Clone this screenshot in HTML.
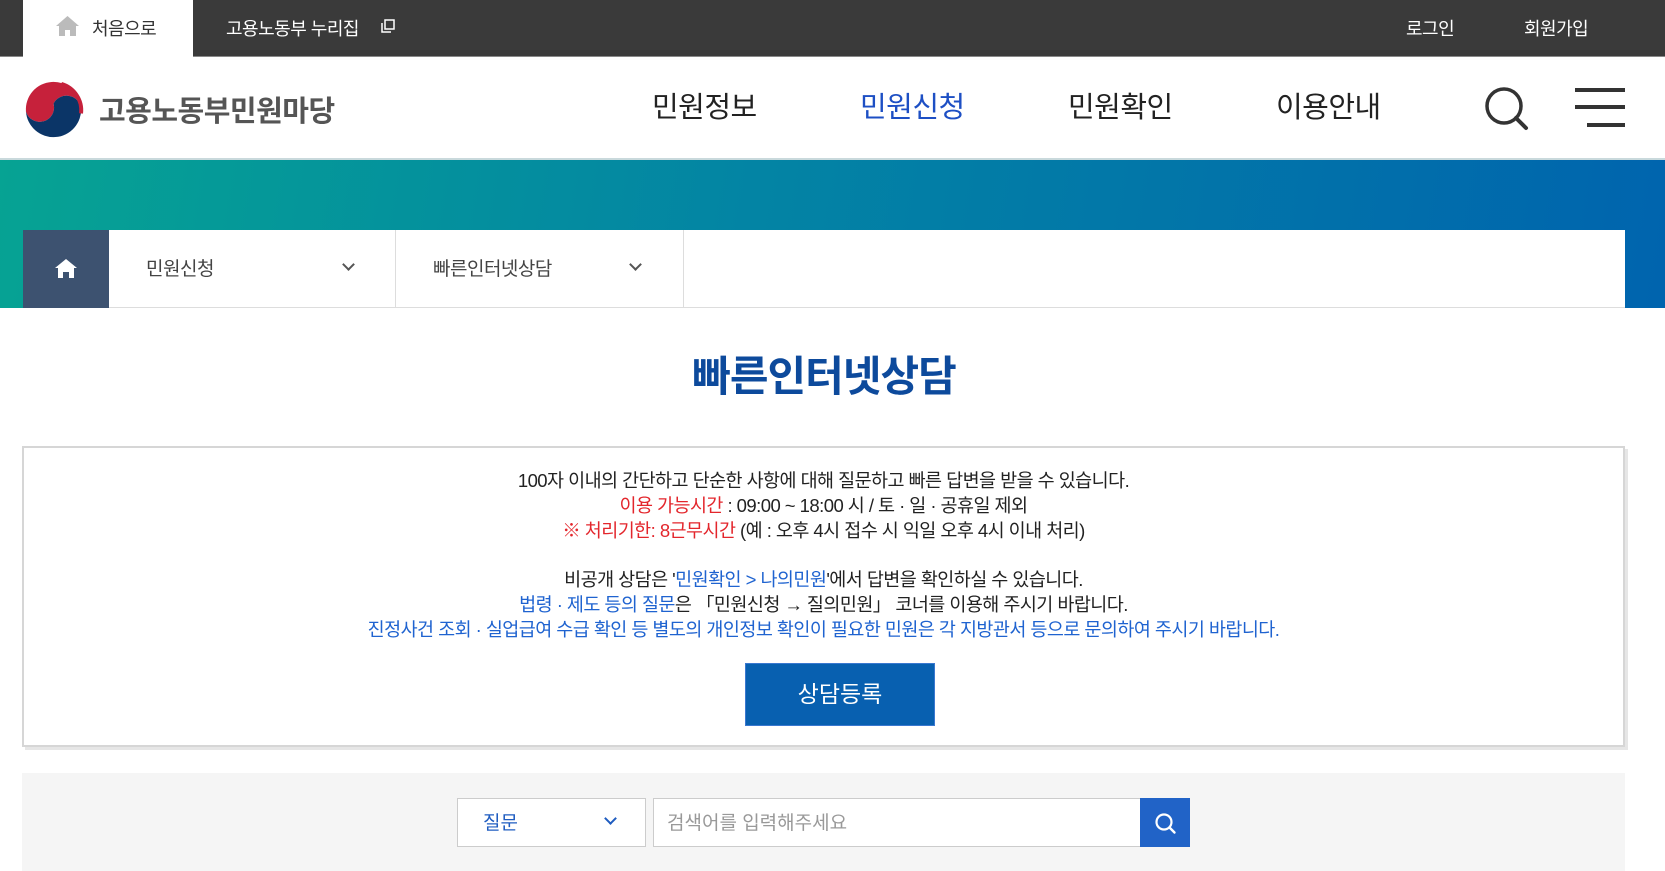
<!DOCTYPE html>
<html><head><meta charset="utf-8"><style>
*{margin:0;padding:0;box-sizing:border-box}
body{width:1665px;height:871px;overflow:hidden;background:#fff;font-family:"Liberation Sans","Noto Sans CJK KR",sans-serif;position:relative;color:#222}
.abs{position:absolute}
.top{left:0;top:0;width:1665px;height:57px;background:#3a3a3a;border-bottom:1px solid #888}
.top span{position:absolute;top:15px;font-size:18px;color:#fff;letter-spacing:-0.5px}
.tab{left:23px;top:0;width:170px;height:58px;background:#fff}
.nav{top:84px;font-size:29px;color:#222;letter-spacing:-0.5px}
.banner{left:0;top:158px;width:1665px;height:150px;background:linear-gradient(100deg,#06a393 0%,#0384a4 45%,#0064ae 100%);border-top:2px solid #c9d9dc}
.bc{left:23px;top:230px;width:1602px;height:78px;background:#fff;border-bottom:1px solid #ddd}
.bc .dd{position:absolute;top:0;height:78px;border-right:1px solid #ddd;font-size:19px;color:#444;line-height:80px;padding-left:37px;letter-spacing:-0.5px}
.chev{position:absolute;top:33px;width:9px;height:9px;border-right:2px solid #555;border-bottom:2px solid #555;transform:rotate(45deg)}
.info{left:22px;top:446px;width:1603px;height:301px;border:2px solid #d6d6d6;box-shadow:3px 3px 0 #e6e6e6}
.info p{text-align:center;font-size:18.5px;letter-spacing:-0.55px;line-height:24.8px;color:#222}
.r{color:#e3262c}.info .b{color:#1f63d0}
</style></head><body>
<div class="abs top">
 <div class="abs tab"></div>
 <svg class="abs" style="left:55px;top:15px" width="25" height="22" viewBox="0 0 25 22"><path d="M12.5 1L1 11h3v10h6v-6h5v6h6V11h3z" fill="#bbb"/></svg>
 <span style="left:92px;color:#333">처음으로</span>
 <span style="left:226px">고용노동부 누리집</span>
 <svg class="abs" style="left:381px;top:19px" width="14" height="14" viewBox="0 0 14 14"><rect x="4" y="1" width="9" height="9" fill="none" stroke="#fff" stroke-width="1.5"/><path d="M1 4v9h9" fill="none" stroke="#fff" stroke-width="1.5"/></svg>
 <span style="left:1406px">로그인</span>
 <span style="left:1524px">회원가입</span>
</div>
<svg class="abs" style="left:22px;top:78px" width="63" height="63" viewBox="0 0 64 64">
 <circle cx="32" cy="32" r="31" fill="#fff"/>
 <path d="M4 34A28 28 0 0 1 60 30 15 15 0 0 0 32 26 14 14 0 0 1 4 34z" fill="#c6213b"/>
 <path d="M4 34A14 14 0 0 0 32 26 15 15 0 0 1 60 30 28 28 0 0 1 4 34z" fill="#0b3567"/>
 <path d="M40 6A28 28 0 0 1 60 36" fill="none" stroke="#c6213b" stroke-width="4"/>
</svg>
<div class="abs" style="left:99px;top:88px;font-size:29px;color:#555;font-weight:bold;letter-spacing:-0.5px">고용노동부민원마당</div>
<div class="abs nav" style="left:652px">민원정보</div>
<div class="abs nav" style="left:860px;color:#1d4fc4">민원신청</div>
<div class="abs nav" style="left:1068px">민원확인</div>
<div class="abs nav" style="left:1276px">이용안내</div>
<svg class="abs" style="left:1485px;top:87px" width="46" height="46" viewBox="0 0 46 46"><circle cx="19" cy="19" r="17" fill="none" stroke="#333" stroke-width="3.5"/><path d="M31 31l10 10" stroke="#333" stroke-width="4" stroke-linecap="round"/></svg>
<div class="abs" style="left:1575px;top:88px;width:50px;height:4px;background:#333"></div>
<div class="abs" style="left:1575px;top:105px;width:50px;height:4px;background:#333"></div>
<div class="abs" style="left:1587px;top:123px;width:38px;height:4px;background:#333"></div>
<div class="abs banner"></div>
<div class="abs bc">
 <div class="abs" style="left:0;top:0;width:86px;height:78px;background:#3d5270"></div>
 <svg class="abs" style="left:32px;top:29px" width="22" height="19" viewBox="0 0 22 19"><path d="M11 0L0 9h3v10h5v-6h6v6h5V9h3z" fill="#fff"/></svg>
 <div class="dd" style="left:86px;width:287px">민원신청<i class="chev" style="left:235px;top:30px"></i></div>
 <div class="dd" style="left:373px;width:288px">빠른인터넷상담<i class="chev" style="left:235px;top:30px"></i></div>
</div>
<div class="abs" style="left:0;top:343px;width:1648px;text-align:center;font-size:42px;font-weight:bold;color:#0d4a9c;letter-spacing:-1px">빠른인터넷상담</div>
<div class="abs info">
 <div style="position:absolute;top:21px;left:0;width:1599px">
 <p>100자 이내의 간단하고 단순한 사항에 대해 질문하고 빠른 답변을 받을 수 있습니다.</p>
 <p><span class="r">이용 가능시간</span> : 09:00 ~ 18:00 시 / 토 · 일 · 공휴일 제외</p>
 <p><span class="r">※ 처리기한: 8근무시간</span> (예 : 오후 4시 접수 시 익일 오후 4시 이내 처리)</p>
 <p>&nbsp;</p>
 <p>비공개 상담은 '<span class="b">민원확인 &gt; 나의민원</span>'에서 답변을 확인하실 수 있습니다.</p>
 <p><span class="b">법령 · 제도 등의 질문</span>은 「민원신청 → 질의민원」 코너를 이용해 주시기 바랍니다.</p>
 <p class="b">진정사건 조회 · 실업급여 수급 확인 등 별도의 개인정보 확인이 필요한 민원은 각 지방관서 등으로 문의하여 주시기 바랍니다.</p>
 </div>
 <div class="abs" style="left:721px;top:215px;width:190px;height:63px;background:#0860b0;border:1px solid #3a78d0;color:#fff;font-size:23px;text-align:center;line-height:60px">상담등록</div>
</div>
<div class="abs" style="left:22px;top:773px;width:1603px;height:98px;background:#f5f5f5"></div>
<div class="abs" style="left:457px;top:798px;width:189px;height:49px;background:#fff;border:1px solid #ccc;font-size:19px;color:#1f5cc0;line-height:49px;padding-left:25px">질문<i class="chev" style="left:148px;top:15px;border-color:#1f5cc0"></i></div>
<div class="abs" style="left:653px;top:798px;width:488px;height:49px;background:#fff;border:1px solid #ccc;font-size:19px;color:#999;line-height:49px;padding-left:13px">검색어를 입력해주세요</div>
<div class="abs" style="left:1140px;top:798px;width:50px;height:49px;background:#2163c7"></div>
<svg class="abs" style="left:1154px;top:812px" width="24" height="24" viewBox="0 0 24 24"><circle cx="10" cy="10" r="7.5" fill="none" stroke="#fff" stroke-width="2.2"/><path d="M15.5 15.5l5 5" stroke="#fff" stroke-width="2.4" stroke-linecap="round"/></svg>
</body></html>
